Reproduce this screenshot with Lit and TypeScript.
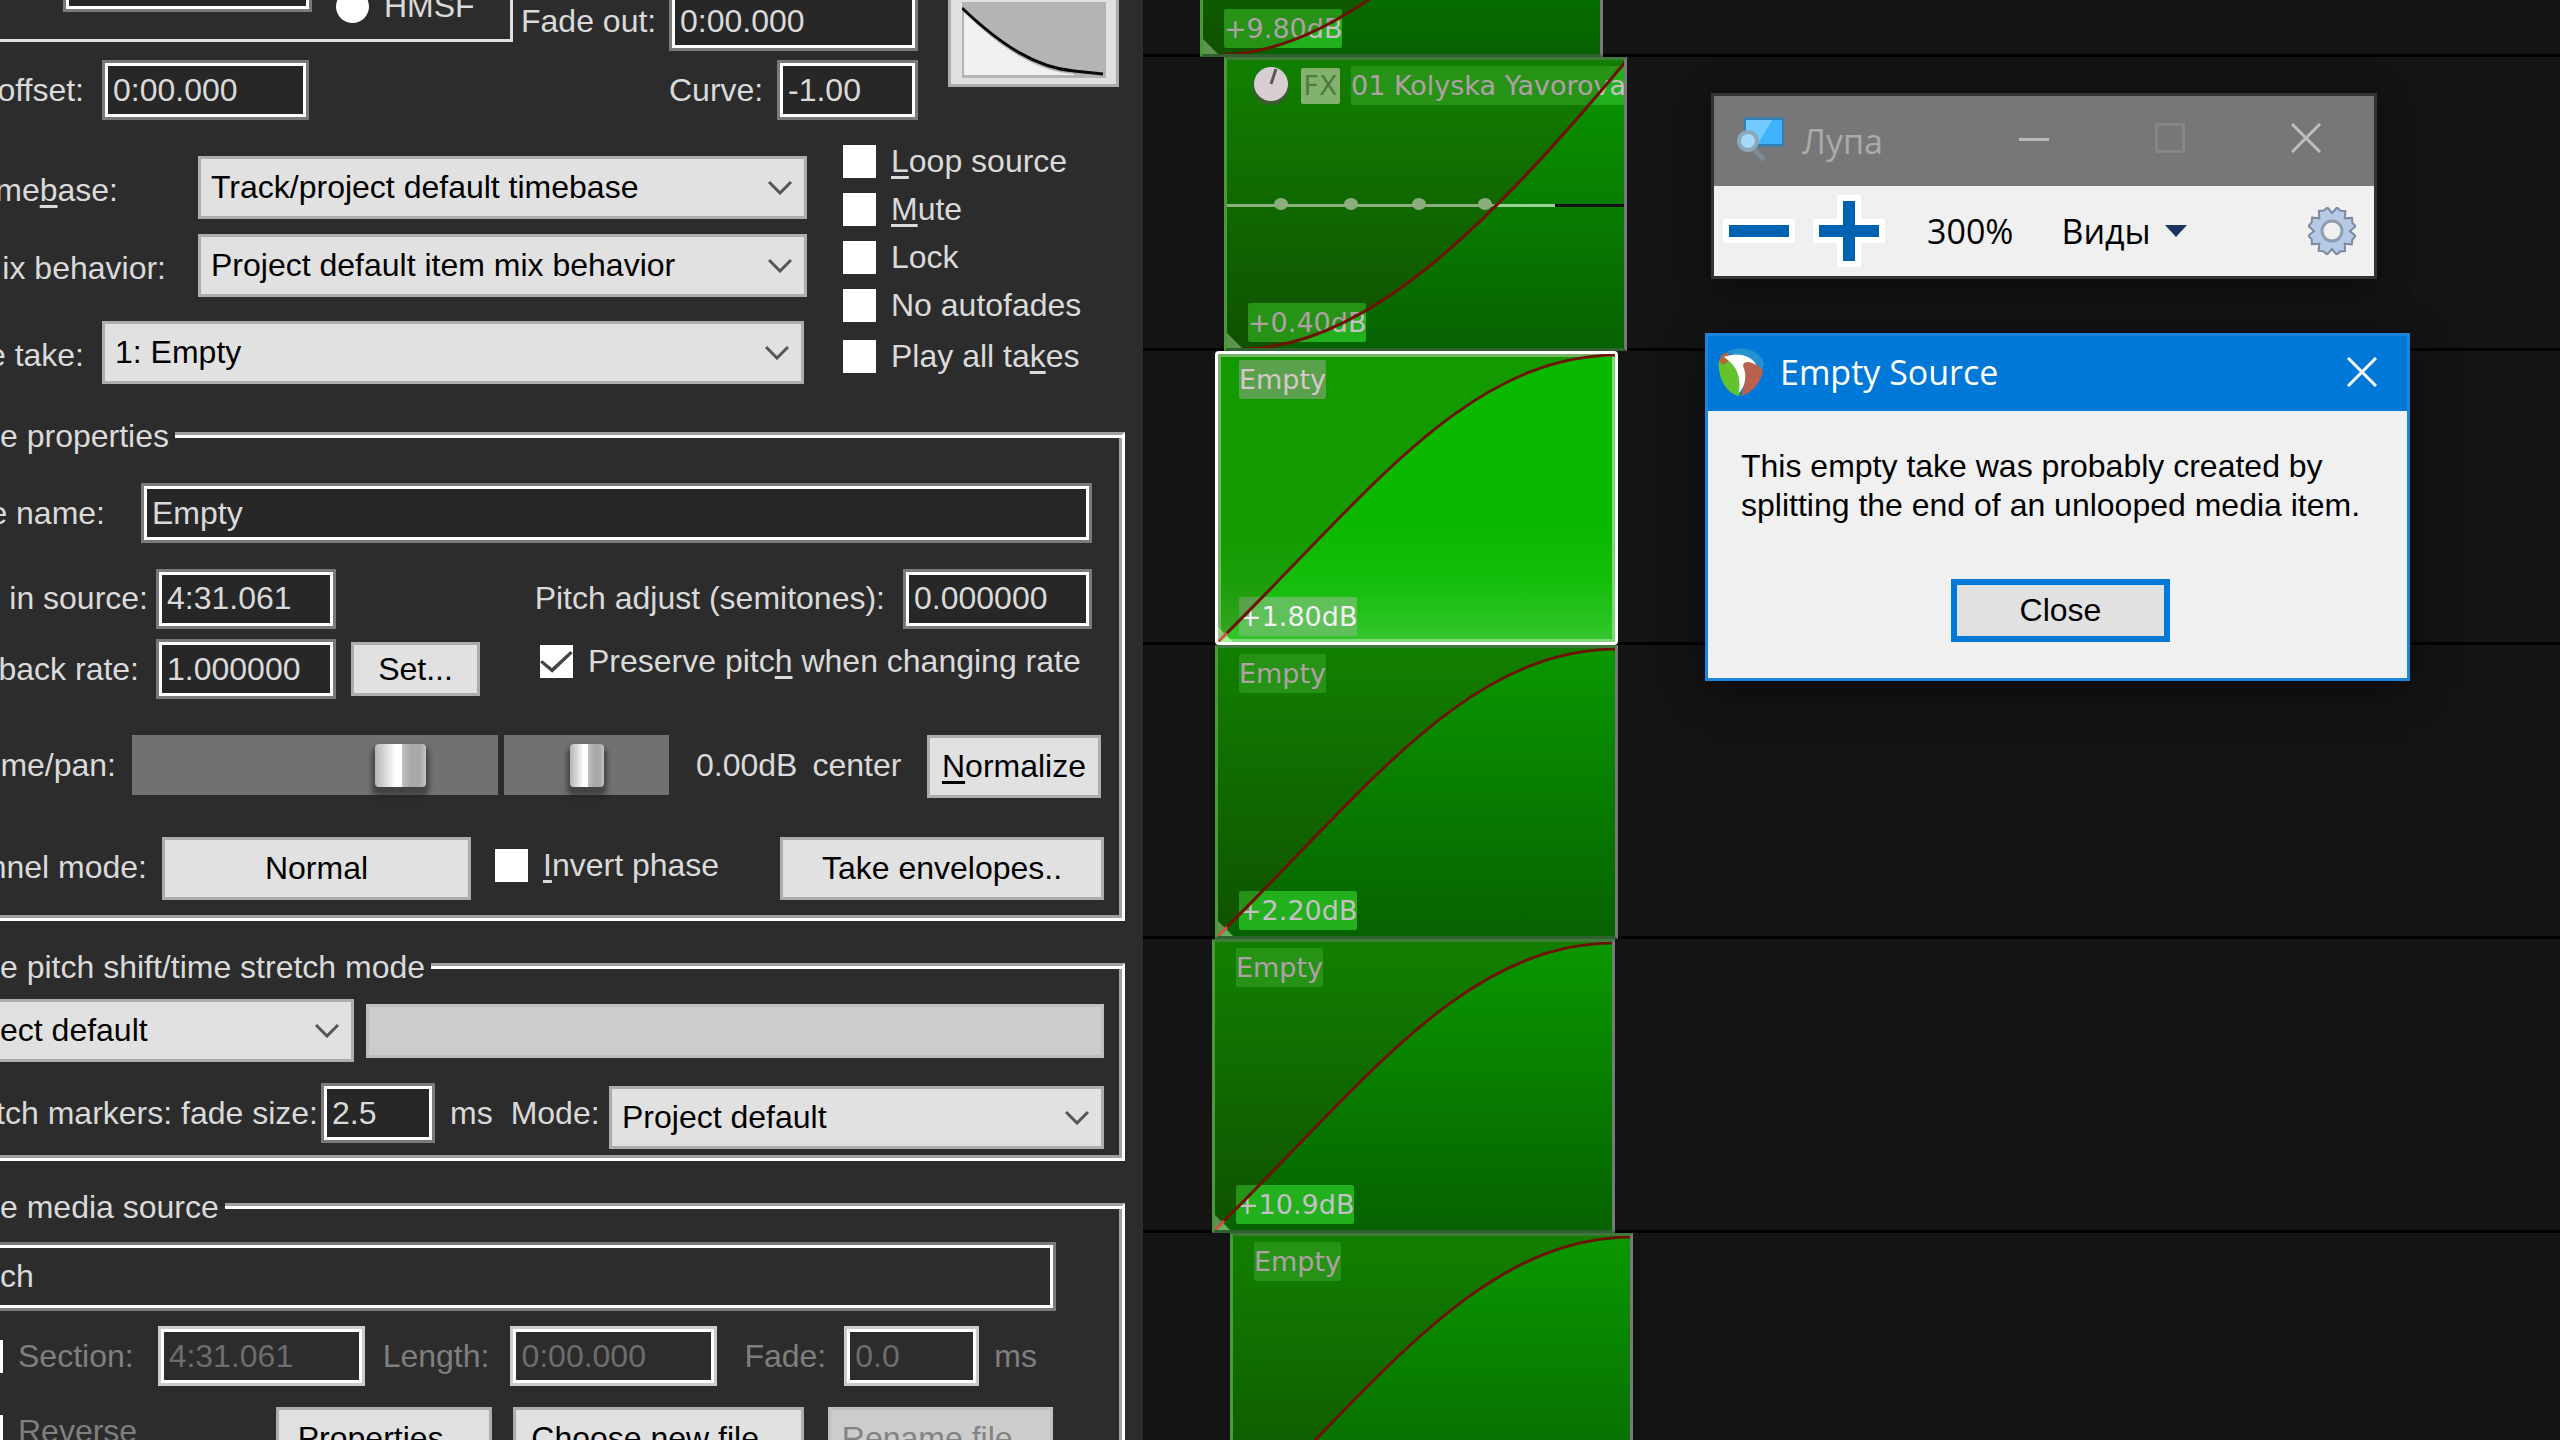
import { LitElement, html, css, svg, nothing } from "lit";
import { customElement, property } from "lit/decorators.js";
import { classMap } from "lit/directives/class-map.js";

const controls = css`
  * {
    box-sizing: border-box;
  }
  button,
  input,
  select {
    font: inherit;
    color: inherit;
    margin: 0;
    border-radius: 0;
    outline: none;
  }
  .btn {
    flex: none;
    height: 63px;
    padding: 0;
    border: 3px solid #adadad;
    background: #e1e1e1;
    color: #000;
    white-space: nowrap;
    overflow: hidden;
  }
  .btn:disabled {
    border-color: #bfbfbf;
    background: #ccc;
    color: #838383;
  }
`;

/* ---------- Item properties panel ---------- */

@customElement("item-properties")
export class ItemProperties extends LitElement {
  static styles = [
    controls,
    css`
      :host {
        display: block;
        overflow: hidden;
        background: #2c2c2c;
        color: #dadada;
        font: 32px/39px "Liberation Sans", sans-serif;
      }
      .panel {
        display: flex;
        flex-direction: column;
        margin-top: -48px;
      }
      .top {
        display: flex;
        height: 168px;
      }
      .times {
        width: 513px;
        display: flex;
        flex-direction: column;
        gap: 18px;
      }
      .format {
        display: flex;
        height: 90px;
        padding-left: 63px;
        border: solid #e0e0e0;
        border-width: 0 3px 3px 0;
        gap: 24px;
      }
      .fades {
        width: 405px;
        display: flex;
        flex-direction: column;
        justify-content: flex-end;
        gap: 9px;
      }
      .row {
        display: flex;
        align-items: center;
      }
      .row.end {
        justify-content: flex-end;
      }
      .row.start {
        align-items: flex-start;
      }
      .row.tall {
        height: 63px;
      }
      .lbl {
        flex: none;
        display: flex;
        justify-content: flex-end;
        white-space: pre;
      }
      .lbl.left {
        justify-content: flex-start;
      }
      .dim {
        color: #7f7f7f;
      }
      .text {
        flex: none;
        height: 60px;
        padding: 0 8px;
        border: 3px solid #7a7a7a;
        background: #272727;
        box-shadow: inset 0 0 0 3px #fff;
      }
      .text:disabled {
        border-color: #ccc;
        background: #2c2c2c;
        color: #6d6d6d;
      }
      .text.cut {
        width: 1056px;
        height: 69px;
        border-left: 0;
        padding: 0;
        background: #2c2c2c;
        box-shadow: inset 0 3px #fff, inset 0 -3px #fff, inset -3px 0 #fff;
      }
      .text.grow {
        flex: 1;
      }
      .pick {
        flex: none;
        display: grid;
        align-items: center;
      }
      .pick select {
        grid-area: 1 / 1;
        appearance: none;
        width: 100%;
        height: 63px;
        padding: 0 10px;
        border: 3px solid #adadad;
        background: #e1e1e1;
        color: #000;
      }
      .pick.cut select {
        border-left: 0;
        padding-left: 0;
      }
      .pick svg {
        grid-area: 1 / 1;
        justify-self: end;
        margin-right: 15px;
        pointer-events: none;
      }
      .check {
        flex: none;
        display: flex;
        align-items: center;
        gap: 15px;
        height: 48px;
        white-space: nowrap;
      }
      .check input {
        appearance: none;
        flex: none;
        display: block;
        width: 33px;
        height: 33px;
        background: #fff;
      }
      .check input:checked::before {
        content: "";
        display: block;
        width: 33px;
        height: 33px;
        background: #444;
        clip-path: polygon(0 52%, 7% 46%, 36% 70%, 92% 18%, 99% 25%, 37% 84%);
      }
      .check input[type="radio"] {
        border-radius: 50%;
      }
      u {
        text-decoration-thickness: 3px;
        text-underline-offset: 4px;
        text-decoration-skip-ink: none;
      }
      .choices {
        display: flex;
        padding-bottom: 27px;
      }
      .selects {
        width: 807px;
        padding-top: 36px;
        display: flex;
        flex-direction: column;
        gap: 15px;
      }
      .selects .lbl {
        padding-top: 6px;
      }
      .selects .row:last-child {
        margin-top: 9px;
      }
      .checks {
        padding: 17px 0 0 36px;
      }
      .checks .check:last-child {
        margin-top: 3px;
      }
      fieldset {
        min-width: 0;
        margin: 0 18px 21px 0;
        padding: 0 18px 0 0;
        border: solid #fff;
        border-width: 3px 3px 3px 0;
        border-top-color: #a0a0a0;
        box-shadow: inset 0 3px #fff, inset -3px 0 #a0a0a0, inset 0 -3px #a0a0a0;
      }
      legend {
        height: 45px;
        padding: 6px 6px 0 0;
        background: #2c2c2c;
      }
      .props {
        padding-top: 27px;
        padding-bottom: 18px;
      }
      .stretch {
        padding-top: 12px;
        padding-bottom: 9px;
      }
      .media {
        padding-top: 15px;
        padding-bottom: 30px;
      }
      .g3 { margin-top: 3px; }
      .g9 { margin-top: 9px; }
      .g15 { margin-top: 15px; }
      .g21 { margin-top: 21px; }
      .g24 { margin-top: 24px; }
      .g36 { margin-top: 36px; }
      .g39 { margin-top: 39px; }
      .push {
        margin-left: auto;
      }
      .track {
        flex: none;
        height: 60px;
        background: #717171;
      }
      .track input {
        appearance: none;
        display: block;
        width: 100%;
        height: 60px;
        background: none;
      }
      .track input::-webkit-slider-thumb {
        appearance: none;
        width: 51px;
        height: 43px;
        border-radius: 4px;
        background: linear-gradient(90deg, #b5b5b5, #e6e6e6 28%, #fff 40%, #fff 53%, #bdbdbd 54%, #a9a9a9 70%, #a9a9a9 88%, #c4c4c4);
        box-shadow: 0 6px 5px 3px rgba(30, 30, 30, 0.55);
      }
      .track.pan input::-webkit-slider-thumb {
        width: 34px;
      }
      .curve {
        flex: none;
        margin-left: 30px;
        width: 171px;
        height: 135px;
        padding: 0 0 6px;
        border: 3px solid #adadad;
        background: #e1e1e1;
        display: flex;
        align-items: flex-end;
        justify-content: center;
      }
      .w108 { width: 108px; }
      .w114 { width: 114px; }
      .w129 { width: 129px; }
      .w135 { width: 135px; }
      .w141 { width: 141px; }
      .w148 { width: 148px; }
      .w165 { width: 165px; }
      .w174 { width: 174px; }
      .w180 { width: 180px; }
      .w189 { width: 189px; }
      .w207 { width: 207px; }
      .w216 { width: 216px; }
      .w225 { width: 225px; }
      .w249 { width: 249px; }
      .w291 { width: 291px; }
      .w309 { width: 309px; }
      .w324 { width: 324px; }
      .w354 { width: 354px; }
      .w366 { width: 366px; }
      .w495 { width: 495px; }
      .w609 { width: 609px; }
      .w702 { width: 702px; }
      .l84 { width: 84px; margin-right: 18px; }
      .l105 { width: 105px; margin-right: 36px; }
      .l116 { width: 116px; margin-right: 16px; }
      .l118 { width: 118px; margin-right: 80px; }
      .l139 { width: 139px; margin-right: 17px; }
      .l147 { width: 147px; margin-right: 15px; }
      .l148 { width: 148px; margin-right: 8px; }
      .l166 { width: 166px; margin-right: 32px; }
      .l318 { width: 318px; margin-right: 3px; }
      .h45 { height: 45px; }
      .h54 { height: 54px; }
      .h57 { height: 57px; }
      .h60 { height: 60px; line-height: 60px; }
      .hm { align-self: flex-end; height: 66px; }
      .m6 { margin-left: 6px; }
      .m12 { margin-left: 12px; }
      .m15 { margin-left: 15px; }
      .m18 { margin-left: 18px; }
      .m21 { margin-left: 21px; }
      .m24 { margin-left: 24px; }
      .m27 { margin-left: 27px; }
      .m60 { margin-left: 60px; }
      .r3 { margin-right: 3px; }
      .r12 { margin-right: 12px; }
      .r51 { margin-right: 51px; }
      .grow { flex: 1; }
      .edge { margin-left: -30px; }
      .mid { align-self: flex-start; }
    `,
  ];

  private pick(id: string, value: string, cls: string) {
    return html`<span class="pick ${cls}">
      <select id=${id} aria-label=${value}><option>${value}</option></select>
      <svg width="24" height="15" viewBox="0 0 24 15" fill="none" stroke="#555" stroke-width="3">
        <path d="M1 2 L12 13 L23 2" />
      </svg>
    </span>`;
  }

  private check(text: unknown, cls = "", checked = false) {
    return html`<label class="check ${cls}"><input type="checkbox" .checked=${checked} /><span>${text}</span></label>`;
  }

  render() {
    return html`<form class="panel" @submit=${(e: Event) => e.preventDefault()}>
      <div class="top">
        <div class="times">
          <div class="format">
            <input class="text w249" aria-label="Time" />
            <label class="check hm"><input type="radio" name="format" /><span>HMSF</span></label>
          </div>
          <div class="row">
            <label class="lbl l84" for="offset">offset:</label>
            <input class="text w207" id="offset" value="0:00.000" />
          </div>
        </div>
        <div class="fades">
          <div class="row end">
            <label class="lbl left w148" for="fadeout">Fade out:</label>
            <input class="text w249" id="fadeout" value="0:00.000" />
          </div>
          <div class="row end">
            <label class="lbl left w108" for="curve">Curve:</label>
            <input class="text w141" id="curve" value="-1.00" />
          </div>
        </div>
        <button class="curve" type="button" aria-label="Fade shape">
          <svg width="144" height="132" viewBox="0 0 144 132">
            <rect y="56" width="144" height="76" fill="#b4b4b4" />
            <path d="M2 66 C40 104 75 125 112 128 L112 129 L2 129 Z" fill="#f0f0f0" />
            <path d="M0 62 C40 100 75 122 112 125 L141 128" fill="none" stroke="#0a0a0a" stroke-width="3" />
          </svg>
        </button>
      </div>

      <div class="choices">
        <div class="selects">
          <div class="row"><label class="lbl l118" for="timebase">me<u>b</u>ase:</label>${this.pick("timebase", "Track/project default timebase", "w609")}</div>
          <div class="row"><label class="lbl l166" for="mix">ix behavior:</label>${this.pick("mix", "Project default item mix behavior", "w609")}</div>
          <div class="row"><label class="lbl l84" for="take">e take:</label>${this.pick("take", "1: Empty", "w702")}</div>
        </div>
        <div class="checks">
          ${this.check(html`<u>L</u>oop source`)} ${this.check(html`<u>M</u>ute`)} ${this.check("Lock")}
          ${this.check("No autofades")} ${this.check(html`Play all ta<u>k</u>es`)}
        </div>
      </div>

      <fieldset>
        <legend>e properties</legend>
        <div class="props">
          <div class="row">
            <label class="lbl l105" for="name">e name:</label>
            <input class="text grow r12" id="name" value="Empty" />
          </div>
          <div class="row tall g24">
            <label class="lbl l148" for="source">in source:</label>
            <input class="text w180" id="source" value="4:31.061" />
            <label class="lbl push" for="pitch">Pitch adjust (semitones):</label>
            <input class="text w189 m18 r12" id="pitch" value="0.000000" />
          </div>
          <div class="row g9">
            <label class="lbl l139" for="rate">back rate:</label>
            <input class="text w180" id="rate" value="1.000000" />
            <button class="btn h54 m15 w129" type="button">Set...</button>
            ${this.check(html`Preserve pitc<u>h</u> when changing rate`, "h45 m60 mid", true)}
          </div>
          <div class="row g36 start">
            <label class="lbl l116 h60" for="volume">me/pan:</label>
            <span class="track w366"><input type="range" id="volume" min="0" max="100" value="77" /></span>
            <span class="track pan m6 w165"><input type="range" aria-label="Pan" min="0" max="100" value="50" /></span>
            <span class="lbl m27 h60">0.00dB</span>
            <span class="lbl m15 h60">center</span>
            <button class="btn w174 push r3" type="button"><u>N</u>ormalize</button>
          </div>
          <div class="row g39 start">
            <span class="lbl l147 h60">nnel mode:</span>
            <button class="btn w309" type="button">Normal</button>
            ${this.check(html`<u>I</u>nvert phase`, "h57 m24")}
            <button class="btn w324 push" type="button">Take envelopes..</button>
          </div>
        </div>
      </fieldset>

      <fieldset>
        <legend>e pitch shift/time stretch mode</legend>
        <div class="stretch">
          <div class="row">
            ${this.pick("shift", "ect default", "w354 cut")}
            <button class="btn h54 m12 grow" type="button" disabled aria-label="Parameters"></button>
          </div>
          <div class="row g21 start">
            <label class="lbl l318 h60" for="size">tch markers: fade size:</label>
            <input class="text w114" id="size" value="2.5" />
            <span class="lbl m15 h60">ms</span>
            <label class="lbl m18 h60" for="mode">Mode:</label>
            ${this.pick("mode", "Project default", "w495 push g3")}
          </div>
        </div>
      </fieldset>

      <fieldset>
        <legend>e media source</legend>
        <div class="media">
          <div class="row"><input class="text cut" aria-label="Media file" value="ch" /></div>
          <div class="row g15">
            ${this.check("Section:", "edge dim")}
            <input class="text w207 m24" aria-label="Section" value="4:31.061" disabled />
            <label class="lbl m18 dim" for="length">Length:</label>
            <input class="text w207 m21" id="length" value="0:00.000" disabled />
            <label class="lbl m27 dim" for="fade">Fade:</label>
            <input class="text w135 m18" id="fade" value="0.0" disabled />
            <span class="lbl m15 dim">ms</span>
          </div>
          <div class="row g21 start">
            ${this.check("Reverse", "edge dim")}
            <button class="btn w216 push" type="button">Properties...</button>
            <button class="btn w291 m21" type="button">Choose new file...</button>
            <button class="btn w225 m24 r51" type="button" disabled>Rename file...</button>
          </div>
        </div>
      </fieldset>
    </form>`;
  }
}

/* ---------- Media item on the timeline ---------- */

const FADE_SLOW_END = "C150 140 255 4 403 4";
const FADE_SLOW_START = "C140 294 260 175 403 3";

@customElement("media-clip")
export class MediaClip extends LitElement {
  @property() name = "";
  @property() gain = "";
  @property({ type: Boolean }) selected = false;
  @property({ type: Boolean }) fx = false;
  @property({ type: Boolean }) rising = false;

  static styles = css`
    * {
      box-sizing: border-box;
    }
    :host {
      display: block;
      width: 403px;
      height: 294px;
    }
    .clip {
      position: relative;
      height: 294px;
      display: flex;
      flex-direction: column;
      justify-content: space-between;
      align-items: flex-start;
      padding: 6px 0 6px 21px;
      border: 3px solid;
      border-color: #3f7a3c #77777c #2f6230 #4b9a3a;
      background: linear-gradient(#0a9800, #066200);
      color: #c6c0c6;
      font: 27px/39px "DejaVu Sans", sans-serif;
      overflow: hidden;
    }
    .selected {
      border-color: #fff;
      border-radius: 4px;
      background: linear-gradient(#0ab800, #0ab800 60%, #15be0c 80%, #36c62e);
      box-shadow: inset 0 0 0 3px #7fd878;
      color: #f2eef2;
    }
    .chip {
      height: 39px;
      border-radius: 2px;
      background: #22b01c;
      white-space: nowrap;
    }
    .selected .chip {
      background: #60c05a;
    }
    .head {
      display: flex;
      align-items: center;
      gap: 11px;
      padding-left: 4px;
    }
    .badge {
      width: 39px;
      height: 36px;
      line-height: 36px;
      border-radius: 2px;
      background: #8fd583;
      color: #54934a;
      text-align: center;
    }
    .over {
      position: absolute;
      left: -3px;
      top: -3px;
      pointer-events: none;
    }
  `;

  render() {
    const fade = this.rising ? FADE_SLOW_START : FADE_SLOW_END;
    const title = html`<span class="chip">${this.name}</span>`;
    return html`<div class=${classMap({ clip: true, selected: this.selected })}>
      ${this.fx
        ? html`<div class="head">
            <svg width="38" height="39" viewBox="0 0 38 39">
              <circle cx="19" cy="21" r="18" fill="#3f6a3c" />
              <circle cx="19" cy="18" r="17" fill="#f4f6fb" />
              <path d="M19 18 L24 3" stroke="#666" stroke-width="3" />
            </svg>
            <span class="badge">FX</span>
            ${title}
          </div>`
        : title}
      <span class="chip">${this.gain}</span>
      <svg class="over" width="403" height="294" viewBox="0 0 403 294">
        ${this.fx
          ? svg`<path d="M3 148.5 H331" stroke="#9bd095" stroke-width="3" />
              <path d="M331 148.5 H400" stroke="#111" stroke-width="3" />
              ${[57, 127, 195, 261].map((x) => svg`<ellipse cx=${x} cy="147" rx="7" ry="6" fill="#9bd095" />`)}`
          : nothing}
        <path d="M0 273 L21 294 H0 Z" fill=${this.selected ? "#b4ffac" : "#7cc474"} opacity="0.8" />
        <path d="M0 294 ${fade} L403 0 H0 Z" fill="#3c0000" fill-opacity="0.16" />
        ${this.rising
          ? svg`<path d="M0 292.5 H22" stroke="#c04a40" stroke-width="3" />`
          : svg`<path d="M0 294 L13 281" stroke="#d05048" stroke-width="3" />`}
        <path d="M${this.rising ? "20 292 C140 290 260 175 403 3" : "12 282 C155 140 255 4 403 4"}" fill="none" stroke="#6c1400" stroke-width="3" />
      </svg>
    </div>`;
  }
}

/* ---------- Magnifier window ---------- */

@customElement("magnifier-window")
export class MagnifierWindow extends LitElement {
  static styles = [
    controls,
    css`
      :host {
        display: block;
        box-sizing: border-box;
        width: 666px;
        border: 3px solid #333;
        font: 34px/45px "Open Sans", "Noto Sans", sans-serif;
        box-shadow: 0 6px 30px rgba(0, 0, 0, 0.5);
      }
      .title {
        display: flex;
        align-items: center;
        height: 90px;
        padding-left: 22px;
        background: #777;
        color: #aaa;
        gap: 15px;
      }
      .name {
        flex: 1;
      }
      .controls {
        display: flex;
        align-self: flex-start;
      }
      .controls button {
        width: 136px;
        height: 84px;
      }
      button {
        display: flex;
        align-items: center;
        justify-content: center;
        padding: 0;
        border: 0;
        background: none;
      }
      .tools {
        display: flex;
        align-items: center;
        height: 90px;
        padding: 0 18px 0 9px;
        background: #f0f0f0;
        color: #000;
      }
      .plus {
        margin-left: 18px;
      }
      .level {
        margin-left: 42px;
      }
      .views {
        margin-left: 48px;
        gap: 14px;
      }
      .gear {
        margin-left: auto;
      }
    `,
  ];

  render() {
    const teeth = Array.from({ length: 8 }, (_, i) => {
      const at = (deg: number, r: number) => {
        const a = ((i * 45 + 22 + deg) * Math.PI) / 180;
        return `${(24 + r * Math.sin(a)).toFixed(1)} ${(24 + r * Math.cos(a)).toFixed(1)}`;
      };
      return `${at(-22, 18)} L${at(-11, 24)} L${at(0, 22)} L${at(11, 24)}`;
    }).join(" L");
    return html`<div class="title">
        <svg width="51" height="48" viewBox="0 0 51 48">
          <rect x="8" y="0" width="40" height="30" fill="#3580ad" />
          <rect x="10" y="3" width="36" height="24" fill="#3fb4fc" />
          <path d="M10 3 H36 L22 27 H10 Z" fill="#74caff" />
          <path d="M19 33 L28 43" stroke="#7d8c94" stroke-width="5" />
          <circle cx="12" cy="24" r="9" fill="#a5d9fb" stroke="#8ba7b8" stroke-width="4" />
        </svg>
        <span class="name">Лупа</span>
        <div class="controls">
          <button aria-label="Minimize"><svg width="30" height="30"><path d="M0 16.5 H30" stroke="#bbb" stroke-width="3" /></svg></button>
          <button aria-label="Maximize"><svg width="30" height="30"><path d="M1.5 1.5 H28.5 V28.5 H1.5 Z" fill="none" stroke="#858585" stroke-width="3" /></svg></button>
          <button aria-label="Close"><svg width="30" height="30"><path d="M1 1 L29 29 M29 1 L1 29" stroke="#bdbdbd" stroke-width="3" /></svg></button>
        </div>
      </div>
      <div class="tools">
        <button aria-label="Zoom out"><svg width="72" height="72"><rect y="24" width="72" height="24" rx="2" fill="#fff" /><rect x="6" y="30" width="60" height="12" fill="#0063b1" /></svg></button>
        <button class="plus" aria-label="Zoom in">
          <svg width="72" height="72" viewBox="0 0 72 72">
            <path d="M24 0 H48 V24 H72 V48 H48 V72 H24 V48 H0 V24 H24 Z" fill="#fff" />
            <path d="M30 6 H42 V30 H66 V42 H42 V66 H30 V42 H6 V30 H30 Z" fill="#0063b1" />
          </svg>
        </button>
        <span class="level">300%</span>
        <button class="views">Виды<svg width="22" height="12"><path d="M0 0 H22 L11 12 Z" fill="#1b365d" /></svg></button>
        <button class="gear" aria-label="Settings">
          <svg width="48" height="48" viewBox="0 0 48 48">
            <path d="M${teeth} Z" fill="#b6cae6" stroke="#7c8aa0" stroke-width="2" />
            <circle cx="24" cy="24" r="10" fill="#f0f0f0" stroke="#8e9bb0" stroke-width="3" />
          </svg>
        </button>
      </div>`;
  }
}

/* ---------- Empty source dialog ---------- */

@customElement("source-dialog")
export class SourceDialog extends LitElement {
  static styles = [
    controls,
    css`
      :host {
        display: block;
        box-sizing: border-box;
        width: 705px;
        border: 3px solid #1b84dd;
        background: #f0f0f0;
        color: #000;
        font: 32px/39px "Liberation Sans", sans-serif;
        box-shadow: 0 9px 36px rgba(0, 0, 0, 0.55);
      }
      .title {
        display: flex;
        align-items: center;
        gap: 15px;
        height: 75px;
        padding: 0 0 3px 9px;
        background: #0078d7;
        color: #fff;
        font: 34px/45px "Open Sans", "Noto Sans", sans-serif;
      }
      .name {
        flex: 1;
      }
      .close {
        display: flex;
        padding: 0 30px;
        border: 0;
        background: none;
      }
      .body {
        display: flex;
        flex-direction: column;
        align-items: center;
        padding: 36px 27px 36px 33px;
        gap: 54px;
      }
      .message {
        margin: 0;
        align-self: flex-start;
        white-space: nowrap;
      }
      .ok {
        width: 219px;
        border: 6px solid #0078d7;
      }
    `,
  ];

  render() {
    return html`<div class="title">
        <svg width="48" height="48" viewBox="0 0 48 48">
          <path d="M9 4 C20 -3 44 0 47 16 L44 26 L20 8 Z" fill="#2392cf" />
          <path d="M2 12 C0 30 10 46 22 48 L25 30 L12 10 Z" fill="#62c32c" />
          <path d="M2 13 C4 6 8 4 12 5 L12 13 L6 17 Z" fill="#b0693a" />
          <path d="M24 14 C34 10 42 18 46 22 C45 34 34 46 24 48 L28 34 Z" fill="#b9604e" />
          <path d="M7 9 C20 3 36 8 39 17 C33 13 26 13 26 18 C30 26 29 38 22 45 C24 28 20 18 7 9 Z" fill="#fff" />
        </svg>
        <span class="name">Empty Source</span>
        <button class="close" aria-label="Close window">
          <svg width="30" height="30"><path d="M1 1 L29 29 M29 1 L1 29" stroke="#fff" stroke-width="3" /></svg>
        </button>
      </div>
      <div class="body">
        <p class="message">This empty take was probably created by<br />splitting the end of an unlooped media item.</p>
        <button class="btn ok">Close</button>
      </div>`;
  }
}

/* ---------- Page ---------- */

const LANES = [
  { start: 57, name: "", gain: "+9.80dB", rising: true },
  { start: 81, name: "01 Kolyska Yavorova", gain: "+0.40dB", fx: true, rising: true },
  { start: 72, name: "Empty", gain: "+1.80dB", selected: true },
  { start: 72, name: "Empty", gain: "+2.20dB" },
  { start: 69, name: "Empty", gain: "+10.9dB" },
  { start: 87, name: "Empty", gain: "" },
];

@customElement("app-root")
export class AppRoot extends LitElement {
  static styles = css`
    :host {
      display: block;
      height: 100vh;
      overflow: hidden;
    }
    .screen {
      display: grid;
      grid-template-columns: minmax(0, 1143fr) minmax(0, 1417fr);
      height: 100%;
      background: #141414;
    }
    .arrange {
      position: relative;
      overflow: hidden;
    }
    .lanes {
      display: flex;
      flex-direction: column;
      margin-top: -237px;
    }
    .lane {
      flex: none;
      height: 294px;
      background: linear-gradient(#000, #000) bottom / 100% 3px no-repeat;
    }
    .magnifier {
      position: absolute;
      left: 568px;
      top: 93px;
    }
    .dialog {
      position: absolute;
      left: 562px;
      top: 333px;
    }
  `;

  render() {
    return html`<main class="screen">
      <item-properties></item-properties>
      <section class="arrange">
        <div class="lanes">
          ${LANES.map(
            (l) => html`<div class="lane">
              <media-clip
                style="margin-left:${l.start}px"
                .name=${l.name}
                .gain=${l.gain}
                ?selected=${!!l.selected}
                ?fx=${!!l.fx}
                ?rising=${!!l.rising}
              ></media-clip>
            </div>`
          )}
        </div>
        <magnifier-window class="magnifier"></magnifier-window>
        <source-dialog class="dialog"></source-dialog>
      </section>
    </main>`;
  }
}
